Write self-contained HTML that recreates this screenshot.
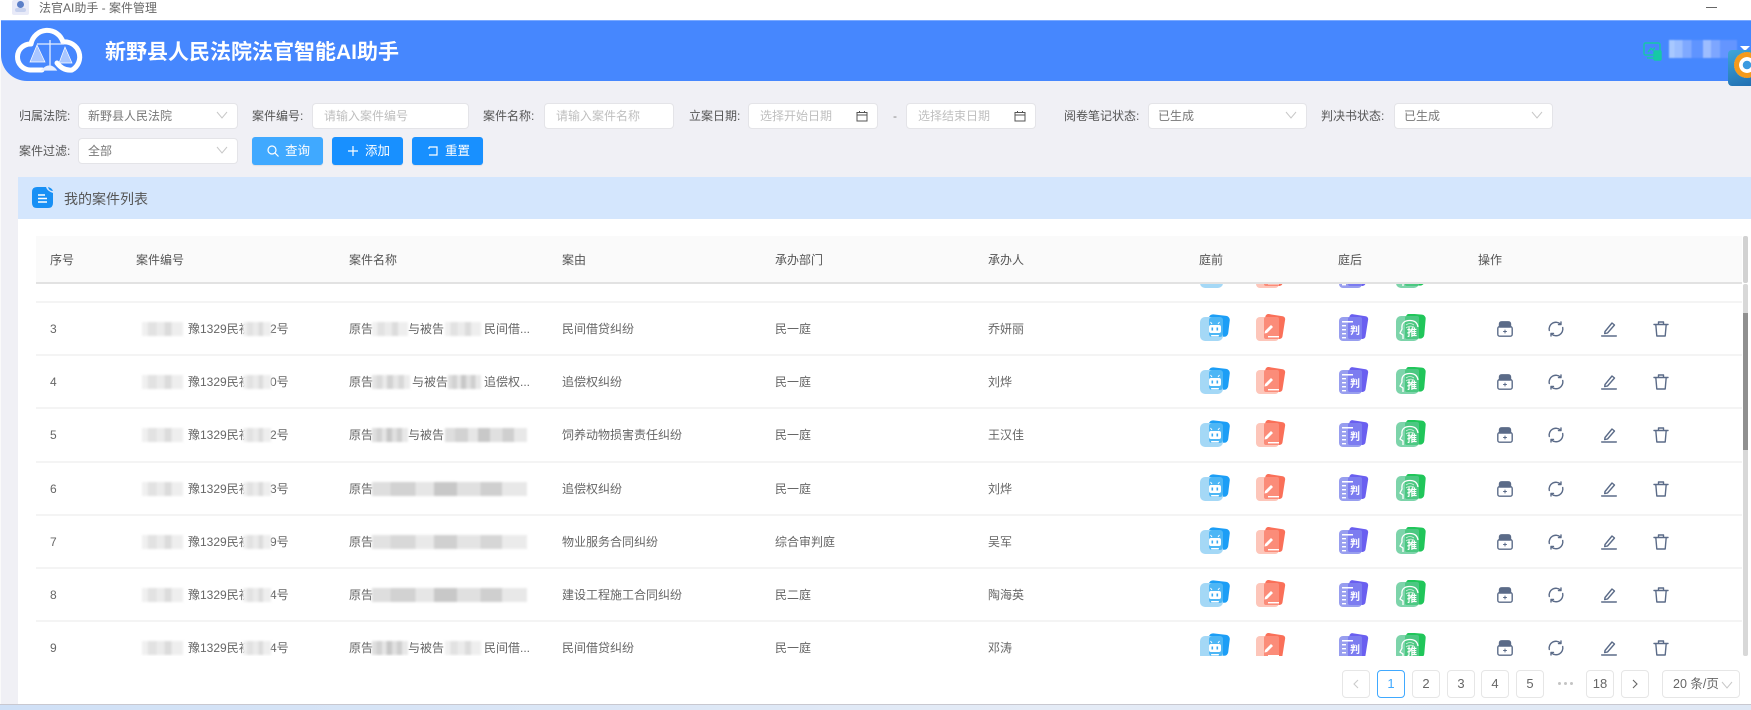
<!DOCTYPE html>
<html lang="zh"><head><meta charset="utf-8"><title>法官AI助手 - 案件管理</title>
<style>
*{box-sizing:border-box}
html,body{margin:0;padding:0}
body{width:1751px;height:710px;position:relative;overflow:hidden;background:#f0f0f5;font-family:"Liberation Sans","Noto Sans CJK SC",sans-serif;font-size:12px;color:#666;filter:blur(.3px)}
.a{position:absolute;white-space:nowrap}
.l{position:absolute;white-space:nowrap;color:#555;line-height:26px;height:26px}
.f{position:absolute;height:26px;background:#fff;border:1px solid #e4e4e8;border-radius:4px;line-height:24px;padding-left:9px;color:#777;white-space:nowrap}
.f.p{color:#bfbfbf;padding-left:11px}
.f svg{position:absolute;right:9px;top:7px}
.btn{position:absolute;top:137px;width:71px;height:28px;background:#1890ff;border-radius:3px;color:#fff;font-size:12.5px;line-height:28px;padding-left:33px;box-shadow:0 1px 1px rgba(0,0,0,.08)}
.btn svg{position:absolute;left:14px;top:7px}
.th{position:absolute;top:248px;line-height:24px;color:#555;white-space:nowrap}
.row{position:absolute;left:0;width:1742px;height:53.2px}
.row::before{content:"";position:absolute;left:36px;right:0;top:-1px;height:2px;background:#f4f4f4}
.c{position:absolute;top:17px;line-height:20px;white-space:nowrap;color:#666}
.m{position:absolute;top:20px;height:14px;filter:blur(1px)}
.b1{background:linear-gradient(90deg,#f0f0f0 0 15%,#e2e2e2 15% 35%,#ebebeb 35% 55%,#dcdcdc 55% 72%,#eeeeee 72%)}
.b2{background:linear-gradient(90deg,#ebebeb 0 20%,#d9d9d9 20% 45%,#e6e6e6 45% 65%,#d2d2d2 65% 85%,#e9e9e9 85%)}
.b3{background:linear-gradient(90deg,#dedede 0 12%,#d2d2d2 12% 28%,#e6e6e6 28% 40%,#c8c8c8 40% 55%,#e0e0e0 55% 70%,#cfcfcf 70% 84%,#e8e8e8 84%)}
.ic{position:absolute;top:12px;width:30px;height:27px;overflow:visible}
.ac{position:absolute;top:19px;width:16px;height:16px;fill:none;stroke:#5b6b88;stroke-width:1.4;stroke-linecap:round;stroke-linejoin:round}
.i1{left:1200px}.i2{left:1256px}.i3{left:1339px}.i4{left:1396px}
.a1{left:1497px}.a2{left:1548px}.a3{left:1601px}.a4{left:1653px}
.ic text{font-family:"Liberation Sans","Noto Sans CJK SC",sans-serif;font-size:10px;font-weight:700;fill:#fff}
.pg{position:absolute;top:670px;width:28px;height:28px;border:1px solid #e6e6e6;border-radius:4px;background:#fff;text-align:center;line-height:26px;font-size:13px;color:#666}
.pg svg{position:absolute;left:9px;top:8px}
</style></head>
<body>
<svg width="0" height="0" style="position:absolute">
<defs>
<symbol id="s1" viewBox="0 0 30 27"><rect x="8" y="1" width="21" height="21" rx="4" fill="#1c9ef6" transform="rotate(7 18 12)"/><rect x="0" y="3" width="23" height="24" rx="5" fill="#a4d8f6"/><rect x="9" y="3" width="14" height="20" rx="3" fill="#4db6f5"/><rect x="9" y="11" width="12" height="8" rx="2" fill="#fff"/><rect x="11.5" y="13.5" width="1.6" height="3" fill="#3ba9f2"/><rect x="16.5" y="13.5" width="1.6" height="3" fill="#3ba9f2"/><path d="M12 10 L10.5 8 M18 10 L19.5 8" stroke="#fff" stroke-width="1"/><rect x="11" y="21" width="8" height="1.5" rx=".7" fill="#fff"/></symbol>
<symbol id="s2" viewBox="0 0 30 27"><rect x="8" y="1" width="20" height="23" rx="3" fill="#fa7059" transform="rotate(9 18 12)"/><rect x="0" y="3" width="23" height="24" rx="4" fill="#fdc6ba"/><rect x="8" y="3" width="15" height="22" rx="2" fill="#fb8c79"/><path d="M9 17 L15 11 L17 13 L11 19 L8.5 19.5 Z" fill="#fff"/><rect x="12" y="22" width="11" height="1.4" fill="#fff"/></symbol>
<symbol id="s3" viewBox="0 0 30 27"><rect x="9" y="1" width="19" height="23" rx="3" fill="#6a5ff0" transform="rotate(9 18 12)"/><rect x="0" y="3" width="23" height="24" rx="4" fill="#989eef"/><rect x="9" y="3" width="14" height="22" rx="2" fill="#7c7cf0"/><rect x="3" y="7" width="11" height="1.5" fill="#fff"/><rect x="3" y="11" width="4" height="1.4" fill="#fff"/><rect x="3" y="15" width="4" height="1.4" fill="#fff"/><rect x="3" y="19" width="4" height="1.4" fill="#fff"/><rect x="3" y="23" width="4" height="1.4" fill="#fff"/></symbol>
<symbol id="s4" viewBox="0 0 30 27"><rect x="9" y="0" width="20" height="24" rx="4" fill="#20c65a" transform="rotate(5 18 12)"/><rect x="0" y="2" width="23" height="25" rx="5" fill="#7dd4aa"/><rect x="9" y="2" width="14" height="23" rx="2" fill="#4cc882"/><path d="M7 25 L7 21 L4 19 L6 15 Q5 7 13 6.5 Q21 6 22 13" fill="none" stroke="#fff" stroke-width="1.3"/><path d="M10 11 Q14 8 18 11 M10 14 Q14 11 18 13" fill="none" stroke="#cfeedd" stroke-width=".8"/></symbol>
<symbol id="ar" viewBox="0 0 12 8"><path d="M1 1 L6 7 L11 1" fill="none" stroke="#c8c8c8" stroke-width="1"/></symbol>
<symbol id="cal" viewBox="0 0 12 12"><path d="M1 2.5 H11 V11 H1 Z M1 5 H11 M3.5 1 V3 M8.5 1 V3" fill="none" stroke="#555" stroke-width="1"/></symbol>
<symbol id="x1" viewBox="0 0 16 16"><path d="M2.5 6 V3 Q2.5 .8 5 .8 H11 Q13.5 .8 13.5 3 V6 Z" fill="#5b6b88"/><rect x=".8" y="5.5" width="14.4" height="9.7" rx="2"/><path d="M8 9 V12 M6.5 10.5 H9.5" stroke-width="1"/></symbol>
<symbol id="x2" viewBox="0 0 16 16"><path d="M1.3 9.5 A6.8 6.8 0 0 1 12.5 3 M14.7 6.5 A6.8 6.8 0 0 1 3.5 13"/><path d="M13 1 V3.6 H10.5 M3 15 V12.4 H5.5"/></symbol>
<symbol id="x3" viewBox="0 0 16 16"><path d="M4 10.5 L11 2 L13.5 4 L6.5 12 L3.7 12.6 Z"/><path d="M.7 15 H15.3"/></symbol>
<symbol id="x4" viewBox="0 0 16 16"><path d="M1 3.5 H15 M5.5 3.5 V1 H10.5 V3.5 M2.8 3.5 L3.8 15 H12.2 L13.2 3.5"/></symbol>
</defs></svg>

<!-- window bar -->
<div class="a" style="left:0;top:0;width:1751px;height:20px;background:#fff"></div>
<div class="a" style="left:12px;top:0;width:17px;height:15px;background:#e8eaf8;border-radius:2px"></div>
<div class="a" style="left:17px;top:1px;width:7px;height:7px;background:#5b7fc8;border-radius:50%"></div>
<div class="a" style="left:15px;top:8px;width:11px;height:4px;background:#c8d2ee;border-radius:2px"></div>
<div class="a" style="left:39px;top:1px;line-height:15px;color:#666">法官AI助手 - 案件管理</div>
<div class="a" style="left:1706px;top:7px;width:11px;height:1px;background:#666"></div>

<!-- header -->
<div class="a" style="left:1px;top:20px;width:1750px;height:61px;background:#4687fe;border-top:1px solid #7aa9ff;border-bottom-left-radius:26px"></div>
<svg class="a" style="left:12px;top:24px" width="80" height="52" viewBox="12 24 80 52"><path d="M42 70 H30 A13 13 0 0 1 31 44 A16.5 16.5 0 0 1 63 42 A15 15 0 0 1 72 70 Q63 71 57 63" fill="none" stroke="#fff" stroke-width="5" stroke-linecap="round" stroke-linejoin="round"/><path d="M50 40 V68 M37 44 H64 M42 70 Q50 62 56 70 Z" stroke="#e6eeff" stroke-width="1.3" fill="#e6eeff"/><path d="M30 62 L37 45 L45 62 Z M59 63 L65 47 L72 63 Z" fill="#a9c6ff" stroke="#fff" stroke-width=".7"/></svg>
<div class="a" style="left:105px;top:38px;font-size:21px;font-weight:700;color:#fff;line-height:30px">新野县人民法院法官智能AI助手</div>
<svg class="a" style="left:1643px;top:42px" width="20" height="19" viewBox="0 0 20 19" fill="none" stroke="#16c9a6" stroke-width="1.4"><rect x="1" y="1" width="16" height="12" rx="1.5"/><path d="M4 16 H11 M5 10 L8 6.5 L10 8 L12 5.5"/><rect x="11" y="9" width="7" height="9" rx="1" fill="#16c9a6"/></svg>
<div class="a" style="left:1669px;top:40px;width:68px;height:18px;filter:blur(.8px);background:linear-gradient(90deg,#a8c8ff 0 8%,#9bbeff 8% 20%,#7fa9ff 20% 33%,#5f94ff 33% 50%,#9dbdff 50% 62%,#7da6ff 62% 75%,#6495ff 75% 100%)"></div>
<div class="a" style="left:1740px;top:46px;width:0;height:0;border-left:5px solid transparent;border-right:5px solid transparent;border-top:5px solid #fff"></div>
<div class="a" style="left:1728px;top:50px;width:30px;height:36px;background:linear-gradient(160deg,#3fa6d8,#1f6cb0);border-radius:4px"></div>
<div class="a" style="left:1734px;top:52px;width:26px;height:26px;border-radius:50%;background:radial-gradient(circle,#3b9ae0 0 22%,#fff 24% 42%,#f59a1c 44% 70%,#fff 72%)"></div>

<!-- filter row 1 -->
<div class="l" style="left:19px;top:103px">归属法院:</div>
<div class="f" style="left:78px;top:103px;width:160px">新野县人民法院<svg width="12" height="8"><use href="#ar"/></svg></div>
<div class="l" style="left:252px;top:103px">案件编号:</div>
<div class="f p" style="left:312px;top:103px;width:157px">请输入案件编号</div>
<div class="l" style="left:483px;top:103px">案件名称:</div>
<div class="f p" style="left:544px;top:103px;width:130px">请输入案件名称</div>
<div class="l" style="left:689px;top:103px">立案日期:</div>
<div class="f p" style="left:748px;top:103px;width:130px">选择开始日期<svg style="top:6px" width="12" height="12"><use href="#cal"/></svg></div>
<div class="l" style="left:893px;top:103px;color:#888">-</div>
<div class="f p" style="left:906px;top:103px;width:130px">选择结束日期<svg style="top:6px" width="12" height="12"><use href="#cal"/></svg></div>
<div class="l" style="left:1064px;top:103px">阅卷笔记状态:</div>
<div class="f" style="left:1148px;top:103px;width:159px">已生成<svg width="12" height="8"><use href="#ar"/></svg></div>
<div class="l" style="left:1321px;top:103px">判决书状态:</div>
<div class="f" style="left:1394px;top:103px;width:159px">已生成<svg width="12" height="8"><use href="#ar"/></svg></div>

<!-- filter row 2 -->
<div class="l" style="left:19px;top:138px">案件过滤:</div>
<div class="f" style="left:78px;top:138px;width:160px">全部<svg width="12" height="8"><use href="#ar"/></svg></div>
<div class="btn" style="left:252px;background:#40a9ff">查询<svg width="14" height="14" viewBox="0 0 14 14" fill="none" stroke="#fff" stroke-width="1.2"><circle cx="6" cy="6" r="4"/><path d="M9 9 L12.5 12.5"/></svg></div>
<div class="btn" style="left:332px">添加<svg width="14" height="14" viewBox="0 0 14 14" fill="none" stroke="#fff" stroke-width="1.2"><path d="M7 2 V12 M2 7 H12"/></svg></div>
<div class="btn" style="left:412px">重置<svg width="14" height="14" viewBox="0 0 14 14" fill="none" stroke="#fff" stroke-width="1.2"><path d="M3 3 H11 V11 H3 M3 3 V5"/></svg></div>

<!-- list card -->
<div class="a" style="left:18px;top:177px;width:1733px;height:42px;background:#d4e6fd"></div>
<svg class="a" style="left:32px;top:187px" width="21" height="21" viewBox="0 0 21 21"><path d="M5 0 H14 Q15 4 21 6 V16 Q21 21 16 21 H5 Q0 21 0 16 V5 Q0 0 5 0 Z" fill="#1890f5"/><path d="M16 0 Q20 1 21 4 Q17 4 16 0 Z" fill="#1890f5"/><path d="M6 8 H13 M6 11.5 H15 M6 15 H15" stroke="#fff" stroke-width="1.6"/></svg>
<div class="a" style="left:64px;top:188px;font-size:14px;line-height:22px;color:#555">我的案件列表</div>
<div class="a" style="left:18px;top:219px;width:1733px;height:485px;background:#fff"></div>

<!-- table header -->
<div class="a" style="left:36px;top:236px;width:1706px;height:48px;background:#fafafa;border-bottom:2px solid #e2e2e2"></div>
<div class="th" style="left:50px">序号</div><div class="th" style="left:136px">案件编号</div><div class="th" style="left:349px">案件名称</div><div class="th" style="left:562px">案由</div><div class="th" style="left:775px">承办部门</div><div class="th" style="left:988px">承办人</div><div class="th" style="left:1199px">庭前</div><div class="th" style="left:1338px">庭后</div><div class="th" style="left:1478px">操作</div>

<!-- table body -->
<div class="a" style="left:0;top:284px;width:1742px;height:372px;overflow:hidden">

<div class="row" style="top:-35.2px">
<svg class="ic i1"><use href="#s1"/></svg><svg class="ic i2"><use href="#s2"/></svg><svg class="ic i3"><use href="#s3"/></svg><svg class="ic i4"><use href="#s4"/></svg>
</div>

<div class="row" style="top:18px">
<span class="c" style="left:50px">3</span><span class="c" style="left:188px">豫1329民初</span><span class="c" style="left:270px">2号</span><span class="m b1" style="left:142px;width:41px"></span><span class="m b1" style="left:243px;width:28px"></span>
<span class="c" style="left:349px">原告</span><span class="c" style="left:408px">与被告</span><span class="c" style="left:484px">民间借...</span><span class="m b1" style="left:372px;width:36px"></span><span class="m b1" style="left:445px;width:36px"></span>
<span class="c" style="left:562px">民间借贷纠纷</span><span class="c" style="left:775px">民一庭</span><span class="c" style="left:988px">乔妍丽</span>
<svg class="ic i1"><use href="#s1"/></svg><svg class="ic i2"><use href="#s2"/></svg><svg class="ic i3"><use href="#s3"/><text x="11" y="20">判</text></svg><svg class="ic i4"><use href="#s4"/><text x="11" y="22">推</text></svg>
<svg class="ac a1"><use href="#x1"/></svg><svg class="ac a2"><use href="#x2"/></svg><svg class="ac a3"><use href="#x3"/></svg><svg class="ac a4"><use href="#x4"/></svg>
</div>

<div class="row" style="top:71.2px">
<span class="c" style="left:50px">4</span><span class="c" style="left:188px">豫1329民初</span><span class="c" style="left:270px">0号</span><span class="m b1" style="left:142px;width:41px"></span><span class="m b1" style="left:243px;width:28px"></span>
<span class="c" style="left:349px">原告</span><span class="c" style="left:412px">与被告</span><span class="c" style="left:484px">追偿权...</span><span class="m b3" style="left:372px;width:38px;opacity:.8"></span><span class="m b3" style="left:448px;width:33px"></span>
<span class="c" style="left:562px">追偿权纠纷</span><span class="c" style="left:775px">民一庭</span><span class="c" style="left:988px">刘烨</span>
<svg class="ic i1"><use href="#s1"/></svg><svg class="ic i2"><use href="#s2"/></svg><svg class="ic i3"><use href="#s3"/><text x="11" y="20">判</text></svg><svg class="ic i4"><use href="#s4"/><text x="11" y="22">推</text></svg>
<svg class="ac a1"><use href="#x1"/></svg><svg class="ac a2"><use href="#x2"/></svg><svg class="ac a3"><use href="#x3"/></svg><svg class="ac a4"><use href="#x4"/></svg>
</div>

<div class="row" style="top:124.4px">
<span class="c" style="left:50px">5</span><span class="c" style="left:188px">豫1329民初</span><span class="c" style="left:270px">2号</span><span class="m b1" style="left:142px;width:41px"></span><span class="m b1" style="left:243px;width:28px"></span>
<span class="c" style="left:349px">原告</span><span class="c" style="left:408px">与被告</span><span class="m b3" style="left:372px;width:36px"></span><span class="m b3" style="left:445px;width:82px"></span>
<span class="c" style="left:562px">饲养动物损害责任纠纷</span><span class="c" style="left:775px">民一庭</span><span class="c" style="left:988px">王汉佳</span>
<svg class="ic i1"><use href="#s1"/></svg><svg class="ic i2"><use href="#s2"/></svg><svg class="ic i3"><use href="#s3"/><text x="11" y="20">判</text></svg><svg class="ic i4"><use href="#s4"/><text x="11" y="22">推</text></svg>
<svg class="ac a1"><use href="#x1"/></svg><svg class="ac a2"><use href="#x2"/></svg><svg class="ac a3"><use href="#x3"/></svg><svg class="ac a4"><use href="#x4"/></svg>
</div>

<div class="row" style="top:177.6px">
<span class="c" style="left:50px">6</span><span class="c" style="left:188px">豫1329民初</span><span class="c" style="left:270px">3号</span><span class="m b1" style="left:142px;width:41px"></span><span class="m b1" style="left:243px;width:28px"></span>
<span class="c" style="left:349px">原告</span><span class="m b3" style="left:372px;width:155px"></span>
<span class="c" style="left:562px">追偿权纠纷</span><span class="c" style="left:775px">民一庭</span><span class="c" style="left:988px">刘烨</span>
<svg class="ic i1"><use href="#s1"/></svg><svg class="ic i2"><use href="#s2"/></svg><svg class="ic i3"><use href="#s3"/><text x="11" y="20">判</text></svg><svg class="ic i4"><use href="#s4"/><text x="11" y="22">推</text></svg>
<svg class="ac a1"><use href="#x1"/></svg><svg class="ac a2"><use href="#x2"/></svg><svg class="ac a3"><use href="#x3"/></svg><svg class="ac a4"><use href="#x4"/></svg>
</div>

<div class="row" style="top:230.8px">
<span class="c" style="left:50px">7</span><span class="c" style="left:188px">豫1329民初</span><span class="c" style="left:270px">9号</span><span class="m b1" style="left:142px;width:41px"></span><span class="m b1" style="left:243px;width:28px"></span>
<span class="c" style="left:349px">原告</span><span class="m b3" style="left:372px;width:155px;opacity:.85"></span>
<span class="c" style="left:562px">物业服务合同纠纷</span><span class="c" style="left:775px">综合审判庭</span><span class="c" style="left:988px">吴军</span>
<svg class="ic i1"><use href="#s1"/></svg><svg class="ic i2"><use href="#s2"/></svg><svg class="ic i3"><use href="#s3"/><text x="11" y="20">判</text></svg><svg class="ic i4"><use href="#s4"/><text x="11" y="22">推</text></svg>
<svg class="ac a1"><use href="#x1"/></svg><svg class="ac a2"><use href="#x2"/></svg><svg class="ac a3"><use href="#x3"/></svg><svg class="ac a4"><use href="#x4"/></svg>
</div>

<div class="row" style="top:284px">
<span class="c" style="left:50px">8</span><span class="c" style="left:188px">豫1329民初</span><span class="c" style="left:270px">4号</span><span class="m b1" style="left:142px;width:41px"></span><span class="m b1" style="left:243px;width:28px"></span>
<span class="c" style="left:349px">原告</span><span class="m b3" style="left:372px;width:155px"></span>
<span class="c" style="left:562px">建设工程施工合同纠纷</span><span class="c" style="left:775px">民二庭</span><span class="c" style="left:988px">陶海英</span>
<svg class="ic i1"><use href="#s1"/></svg><svg class="ic i2"><use href="#s2"/></svg><svg class="ic i3"><use href="#s3"/><text x="11" y="20">判</text></svg><svg class="ic i4"><use href="#s4"/><text x="11" y="22">推</text></svg>
<svg class="ac a1"><use href="#x1"/></svg><svg class="ac a2"><use href="#x2"/></svg><svg class="ac a3"><use href="#x3"/></svg><svg class="ac a4"><use href="#x4"/></svg>
</div>

<div class="row" style="top:337.2px">
<span class="c" style="left:50px">9</span><span class="c" style="left:188px">豫1329民初</span><span class="c" style="left:270px">4号</span><span class="m b1" style="left:142px;width:41px"></span><span class="m b1" style="left:243px;width:28px"></span>
<span class="c" style="left:349px">原告</span><span class="c" style="left:408px">与被告</span><span class="c" style="left:484px">民间借...</span><span class="m b3" style="left:372px;width:36px"></span><span class="m b1" style="left:445px;width:36px"></span>
<span class="c" style="left:562px">民间借贷纠纷</span><span class="c" style="left:775px">民一庭</span><span class="c" style="left:988px">邓涛</span>
<svg class="ic i1"><use href="#s1"/></svg><svg class="ic i2"><use href="#s2"/></svg><svg class="ic i3"><use href="#s3"/><text x="11" y="20">判</text></svg><svg class="ic i4"><use href="#s4"/><text x="11" y="22">推</text></svg>
<svg class="ac a1"><use href="#x1"/></svg><svg class="ac a2"><use href="#x2"/></svg><svg class="ac a3"><use href="#x3"/></svg><svg class="ac a4"><use href="#x4"/></svg>
</div>
</div>

<!-- scrollbars -->
<div class="a" style="left:1743px;top:236px;width:5px;height:47px;background:#d2d2d2;border-radius:2px"></div>
<div class="a" style="left:1743px;top:284px;width:5px;height:372px;background:#d8d8d8;border-radius:2px"></div>
<div class="a" style="left:1743px;top:313px;width:5px;height:137px;background:#909090"></div>

<!-- pagination -->
<div class="pg" style="left:1342px"><svg width="8" height="10" viewBox="0 0 8 10" style="left:9px"><path d="M6 1 L2 5 L6 9" fill="none" stroke="#ccc" stroke-width="1.1"/></svg></div>
<div class="pg" style="left:1377px;border-color:#40a9ff;color:#40a9ff">1</div>
<div class="pg" style="left:1412px">2</div>
<div class="pg" style="left:1447px">3</div>
<div class="pg" style="left:1481px">4</div>
<div class="pg" style="left:1516px">5</div>
<div class="a" style="left:1558px;top:682px;width:3px;height:3px;border-radius:50%;background:#c4c4c4"></div>
<div class="a" style="left:1564px;top:682px;width:3px;height:3px;border-radius:50%;background:#c4c4c4"></div>
<div class="a" style="left:1570px;top:682px;width:3px;height:3px;border-radius:50%;background:#c4c4c4"></div>
<div class="pg" style="left:1586px">18</div>
<div class="pg" style="left:1621px"><svg width="8" height="10" viewBox="0 0 8 10"><path d="M2 1 L6 5 L2 9" fill="none" stroke="#666" stroke-width="1.1"/></svg></div>
<div class="pg" style="left:1662px;width:78px;text-align:left;padding-left:10px;font-size:12.5px">20 条/页<svg style="position:absolute;left:auto;right:6px;top:10px" width="12" height="8"><use href="#ar"/></svg></div>

<!-- bottom -->
<div class="a" style="left:0;top:704px;width:1751px;height:1px;background:#c8c8d0"></div>
<div class="a" style="left:0;top:705px;width:1751px;height:5px;background:linear-gradient(90deg,#cfe0f6,#e4ebf6 60%,#dfe8f5)"></div>
<div class="a" style="left:0;top:20px;width:1px;height:684px;background:#fafafa"></div>
</body></html>
